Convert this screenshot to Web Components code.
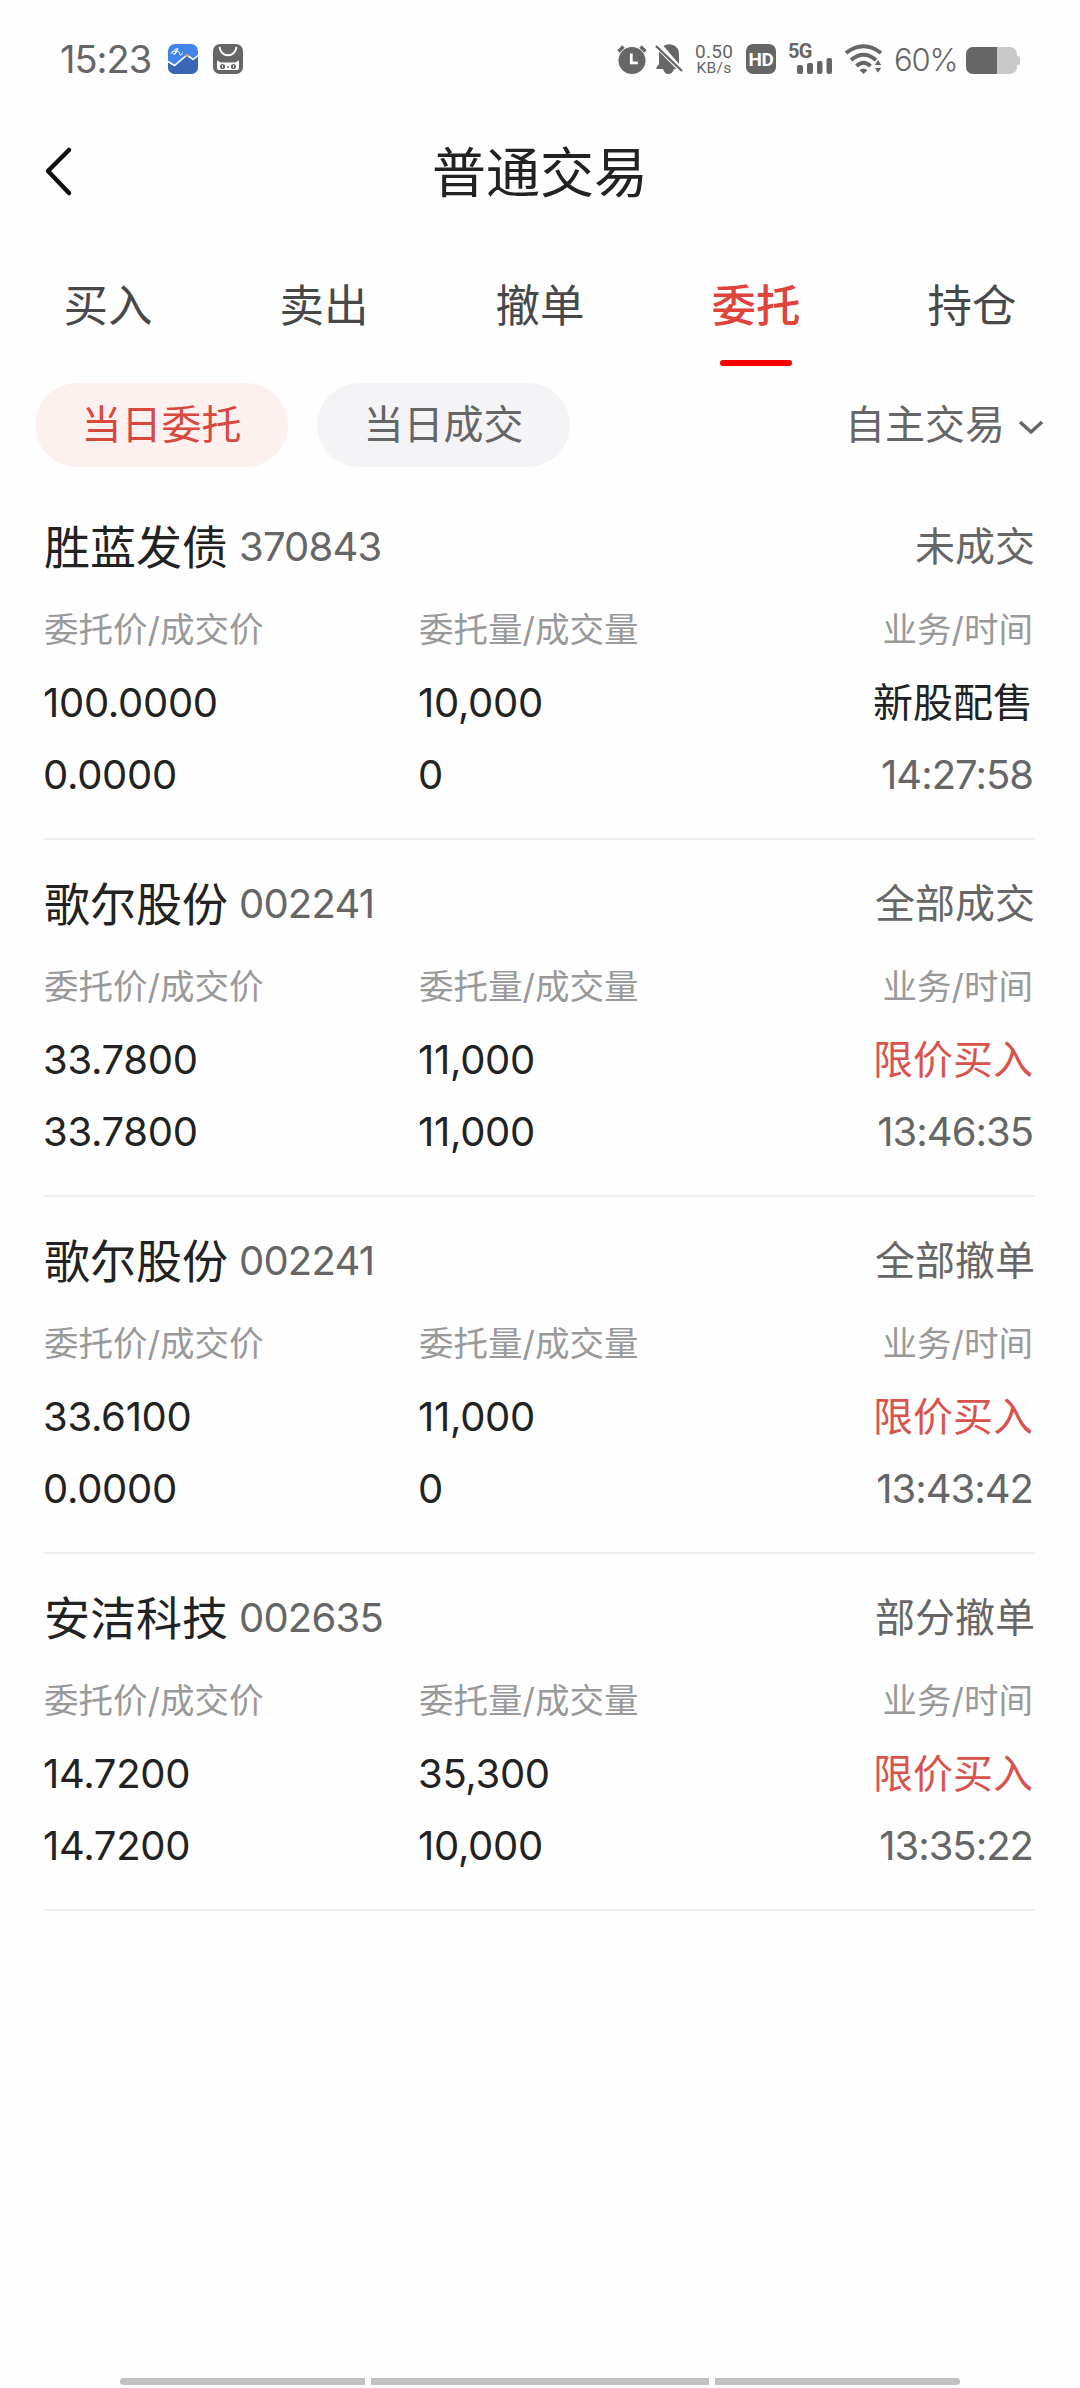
<!DOCTYPE html>
<html lang="zh-CN">
<head>
<meta charset="utf-8">
<meta name="viewport" content="width=device-width">
<title>普通交易</title>
<style>
  body {
    margin: 0;
    background: #fefefe;
    font-family: Inter, "Noto Sans CJK SC", sans-serif;
    color: #222;
  }
</style>
</head>
<body>
<trade-app></trade-app>

<script>
/** Creates a template from markup */
const html = markup => {
  const template = document.createElement('template')
  template.innerHTML = markup
  return template
}

class BaseElement extends HTMLElement {
  constructor() {
    super()
    this.attachShadow({ mode: 'open' })
    this.shadowRoot.append(this.constructor.template.content.cloneNode(true))
  }
}

class StatusBar extends BaseElement {
  static template = html(`
    <style>
      :host {
        display: flex;
        justify-content: space-between;
        height: 118px;
        box-sizing: border-box;
        padding: 44px 60px 0 60px;
        color: #666;
      }
      .side {
        display: flex;
        align-items: flex-start;
        height: 30px;
      }
      svg {
        display: block;
        flex: none;
      }
      .time {
        width: 108px;
        font-size: 38px;
        line-height: 30px;
        letter-spacing: -1px;
        white-space: nowrap;
      }
      .speed {
        width: 38px;
        margin: 0 13px 0 12px;
        font: 19px/15px Roboto, sans-serif;
        letter-spacing: 0.3px;
        text-align: center;
        white-space: nowrap;
      }
      .speed div + div {
        font-size: 15.500px;
        line-height: 19px;
      }
      .hd {
        width: 30px;
        height: 30px;
        border-radius: 7px;
        background: #666;
        color: #fff;
        font: bold 19px/31px Roboto, sans-serif;
        letter-spacing: -0.4px;
        text-align: center;
      }
      .signal {
        width: 45px;
        height: 30px;
        margin-left: 12px;
        display: grid;
      }
      .signal > * {
        grid-area: 1 / 1;
      }
      .signal span {
        font: bold 20px/15px Roboto, sans-serif;
        letter-spacing: -0.6px;
      }
      .percent {
        width: 63px;
        margin: 0 9px 0 11px;
        font-size: 31px;
        font-weight: 300;
        line-height: 32px;
        letter-spacing: -1.200px;
        white-space: nowrap;
      }
    </style>
    <div class="side">
      <div class="time">15:23</div>
      <svg width="30" height="30" viewBox="0 0 30 30">
        <rect width="30" height="30" rx="7" fill="#4285e8"/>
        <path d="M0 18l6 4 13-11 6 4 5-4v12a7 7 0 0 1-7 7H7a7 7 0 0 1-7-7z" fill="#3a66b5"/>
        <path d="M0 17.500l6.500 4L19 11l6 4.500 5-4" fill="none" stroke="#fff" stroke-width="1.600"/>
        <path d="M6 6.500q2-3 4-1l-3 2M2.500 9.500q2-2 3 0t3-1 3 1 3-1M4 7.500l5-.5M10 4l-4 7" fill="none" stroke="#fff" stroke-width="1"/>
        <circle cx="19" cy="11.500" r="1.600" fill="#c6985c"/>
      </svg>
      <svg width="30" height="30" viewBox="0 0 30 30" style="margin-left: 15px">
        <rect width="30" height="30" rx="7" fill="#666"/>
        <path d="M6.500 3c1.500 11 15.500 11 17 0" fill="none" stroke="#fff" stroke-width="2"/>
        <path d="M4 16.500l4 2h14l4-2v7.500q0 2-2 2H6q-2 0-2-2z" fill="#fff"/>
        <circle cx="9.500" cy="22.500" r="2.600" fill="#666"/>
        <circle cx="20.500" cy="22.500" r="2.600" fill="#666"/>
        <path d="M9.500 21v3M20.500 21v3" stroke="#ddd"/>
        <path d="M14 23h2" stroke="#666" stroke-width="1.500"/>
      </svg>
    </div>
    <div class="side">
      <svg width="30" height="30" viewBox="0 0 30 30">
        <circle cx="15" cy="16.500" r="13.500" fill="#666"/>
        <path d="M1.500 7.500l5-5M28.500 7.500l-5-5" stroke="#666" stroke-width="3.400"/>
        <path d="M14.300 9.500v9.300h6.500" fill="none" stroke="#fff" stroke-width="2.800"/>
      </svg>
      <svg width="28" height="30" viewBox="0 0 28 30" style="margin-left: 8px">
        <path d="M8.500 2Q13-1 18 1q6 2.500 6 9v10zM4 7.500L21.500 25H19q-1.500 5-5.500 5T8 25H1.500v-2L4 20z" fill="#666"/>
        <path d="M1 2l26 25" stroke="#666" stroke-width="2.400"/>
      </svg>
      <div class="speed"><div>0.50</div><div>KB/s</div></div>
      <div class="hd">HD</div>
      <div class="signal">
        <span>5G</span>
        <svg width="45" height="30" viewBox="0 0 45 30" fill="#666">
          <rect x="9" y="21" width="6" height="9" rx="2"/>
          <rect x="19" y="19" width="6" height="11" rx="2"/>
          <rect x="29" y="17" width="5.500" height="13" rx="2"/>
          <rect x="38.500" y="14" width="5.500" height="16" rx="2"/>
        </svg>
      </div>
      <svg width="38" height="30" viewBox="0 0 38 30" style="margin-left: 12px">
        <path d="M1 9q17.500-13.500 35 0M6 16q12.500-10.500 25 0M11.500 22q7-6.500 14 0" fill="none" stroke="#666" stroke-width="4"/>
        <path d="M14.500 26q4-3 8 0l-4 4z" fill="#666"/>
        <path d="M29 21.500l4-6.500 4 6.500zM29 23.500h8l-4 6z" fill="#666" stroke="#fff" stroke-width="1"/>
      </svg>
      <div class="percent">60%</div>
      <svg width="54" height="30" viewBox="0 0 54 30">
        <rect y="3" width="51" height="27" rx="7" fill="#c9c9c9"/>
        <path d="M51 12q3 0 3 2v5q0 2-3 2z" fill="#c9c9c9"/>
        <path d="M7 3h24v27H7a7 7 0 0 1-7-7V10a7 7 0 0 1 7-7z" fill="#666"/>
      </svg>
    </div>
  `)
}

class NavHeader extends BaseElement {
  static template = html(`
    <style>
      :host {
        display: grid;
        grid-template-columns: 120px 1fr 120px;
        align-items: center;
        height: 108px;
      }
      svg {
        display: block;
        margin-left: 44px;
      }
      h1 {
        margin: 4px 0 0;
        font-size: 54px;
        font-weight: 400;
        line-height: 72px;
        text-align: center;
      }
    </style>
    <svg width="30" height="52" viewBox="0 0 30 52">
      <path d="M25 4L4 25l21 22" fill="none" stroke="#111" stroke-width="4.500" stroke-linecap="round" stroke-linejoin="round"/>
    </svg>
    <h1><slot></slot></h1>
  `)
}

class TabItem extends BaseElement {
  static template = html(`
    <style>
      :host {
        display: flex;
        flex: 1;
        flex-direction: column;
        align-items: center;
        color: #484848;
        font-size: 44.500px;
        line-height: 60px;
      }
      :host([active]) {
        color: #e0433a;
        font-weight: 500;
      }
      :host([active])::after {
        content: "";
        width: 72px;
        height: 6px;
        margin-top: 24px;
        border-radius: 3px;
        background: #f90000;
      }
    </style>
    <span><slot></slot></span>
  `)
}

class TabBar extends BaseElement {
  static template = html(`
    <style>
      :host {
        display: flex;
        height: 107px;
        padding-top: 50px;
      }
    </style>
    <slot></slot>
  `)
}

class FilterChip extends BaseElement {
  static template = html(`
    <style>
      :host {
        display: flex;
        align-items: center;
        justify-content: center;
        width: 253px;
        height: 84px;
        border-radius: 42px;
        background: #f4f4f7;
        color: #666;
        font-size: 40px;
        line-height: 56px;
      }
      :host([active]) {
        background: #fdf1ef;
        color: #d9473d;
      }
    </style>
    <span><slot></slot></span>
  `)
}

class FilterBar extends BaseElement {
  static template = html(`
    <style>
      :host {
        display: flex;
        align-items: center;
        gap: 29px;
        padding: 0 35px;
      }
      .mode {
        display: flex;
        align-items: center;
        gap: 12px;
        margin-left: auto;
        color: #666;
        font-size: 40px;
        line-height: 56px;
      }
      svg {
        margin-top: 4px;
      }
    </style>
    <slot></slot>
    <div class="mode">
      <slot name="mode"></slot>
      <svg width="28" height="18" viewBox="0 0 28 18">
        <path d="M3 4l11 10L25 4" fill="none" stroke="#666" stroke-width="3.400"/>
      </svg>
    </div>
  `)
}

class OrderItem extends BaseElement {
  static template = html(`
    <style>
      :host {
        display: block;
        height: 357px;
        box-sizing: border-box;
        margin: 0 45px 0 44px;
        border-bottom: 2px solid #f0f0f0;
        font-size: 40px;
      }
      header {
        display: flex;
        align-items: center;
        height: 64px;
        padding-top: 32px;
        line-height: 64px;
        color: #666;
      }
      .name {
        margin-right: 11px;
        color: #222;
        font-size: 46px;
      }
      .code {
        letter-spacing: -0.8px;
      }
      .status {
        margin-left: auto;
      }
      .grid {
        display: grid;
        grid-template-columns: 375px 1fr auto;
        grid-template-rows: 72px 74px 70px;
        align-items: center;
        margin-top: 15px;
        line-height: 56px;
      }
      .label {
        color: #999;
        font-size: 34.500px;
      }
      .price, .deal-price, .amount, .deal-amount {
        margin-left: -1px;
        letter-spacing: -0.3px;
      }
      .right {
        padding-right: 2px;
        text-align: right;
      }
      .time {
        color: #666;
        letter-spacing: -1px;
      }
      :host([side="buy"]) .kind {
        color: #d9534d;
      }
    </style>
    <header>
      <span class="name"></span>
      <span class="code"></span>
      <span class="status"></span>
    </header>
    <div class="grid">
      <span class="label">委托价/成交价</span>
      <span class="label">委托量/成交量</span>
      <span class="label right">业务/时间</span>
      <span class="price"></span>
      <span class="amount"></span>
      <span class="kind right"></span>
      <span class="deal-price"></span>
      <span class="deal-amount"></span>
      <span class="time right"></span>
    </div>
  `)

  /** @param {Record<string, string>} order */
  set order(order) {
    this.setAttribute('side', order.side)
    for (const key of ['name', 'code', 'status', 'price', 'amount', 'kind', 'deal-price', 'deal-amount', 'time']) {
      this.shadowRoot.querySelector('.' + key).textContent = order[key]
    }
  }
}

class GestureBar extends BaseElement {
  static template = html(`
    <style>
      :host {
        display: flex;
        gap: 6px;
        height: 7px;
        margin: auto 120px 3px;
      }
      i {
        width: 245px;
        background: #c1c1c1;
      }
      i:first-of-type {
        border-radius: 4px 0 0 4px;
      }
      i:nth-of-type(2) {
        flex: 1;
      }
      i:last-of-type {
        border-radius: 0 4px 4px 0;
      }
    </style>
    <i></i><i></i><i></i>
  `)
}

const orders = [
  {
    name: '胜蓝发债', code: '370843', status: '未成交', side: 'allot', kind: '新股配售', time: '14:27:58',
    price: '100.0000', amount: '10,000', 'deal-price': '0.0000', 'deal-amount': '0',
  },
  {
    name: '歌尔股份', code: '002241', status: '全部成交', side: 'buy', kind: '限价买入', time: '13:46:35',
    price: '33.7800', amount: '11,000', 'deal-price': '33.7800', 'deal-amount': '11,000',
  },
  {
    name: '歌尔股份', code: '002241', status: '全部撤单', side: 'buy', kind: '限价买入', time: '13:43:42',
    price: '33.6100', amount: '11,000', 'deal-price': '0.0000', 'deal-amount': '0',
  },
  {
    name: '安洁科技', code: '002635', status: '部分撤单', side: 'buy', kind: '限价买入', time: '13:35:22',
    price: '14.7200', amount: '35,300', 'deal-price': '14.7200', 'deal-amount': '10,000',
  },
]

class TradeApp extends BaseElement {
  static template = html(`
    <style>
      :host {
        display: flex;
        flex-direction: column;
        width: 1080px;
        height: 2388px;
      }
      .orders {
        margin-top: 16px;
      }
    </style>
    <status-bar></status-bar>
    <nav-header>普通交易</nav-header>
    <tab-bar>
      <tab-item>买入</tab-item>
      <tab-item>卖出</tab-item>
      <tab-item>撤单</tab-item>
      <tab-item active>委托</tab-item>
      <tab-item>持仓</tab-item>
    </tab-bar>
    <filter-bar>
      <filter-chip active>当日委托</filter-chip>
      <filter-chip>当日成交</filter-chip>
      <span slot="mode">自主交易</span>
    </filter-bar>
    <div class="orders"></div>
    <gesture-bar></gesture-bar>
  `)

  connectedCallback() {
    const list = this.shadowRoot.querySelector('.orders')
    list.replaceChildren(...orders.map(order => {
      const item = document.createElement('order-item')
      item.order = order
      return item
    }))
  }
}

customElements.define('status-bar', StatusBar)
customElements.define('nav-header', NavHeader)
customElements.define('tab-item', TabItem)
customElements.define('tab-bar', TabBar)
customElements.define('filter-chip', FilterChip)
customElements.define('filter-bar', FilterBar)
customElements.define('order-item', OrderItem)
customElements.define('gesture-bar', GestureBar)
customElements.define('trade-app', TradeApp)
</script>
</body>
</html>
